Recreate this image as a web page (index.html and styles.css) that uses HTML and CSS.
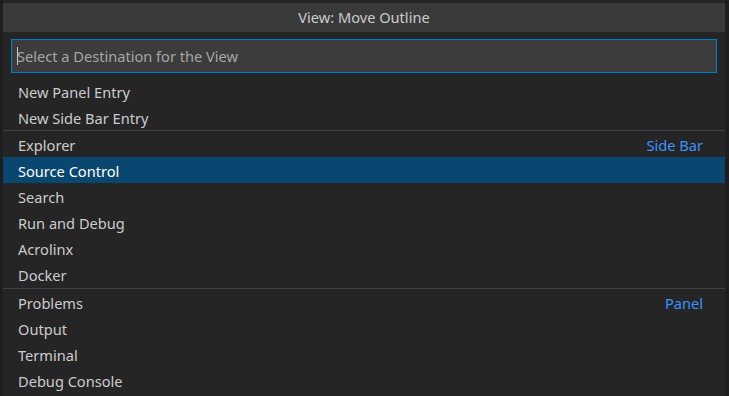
FILE: index.html
```html
<!DOCTYPE html>
<html lang="en">
<head>
    <meta charset="UTF-8">
    <title>View: Move Outline</title>
    <link rel="stylesheet" href="styles.css">
</head>
<body>
    <div class="quick-input">
        <div class="title">View: Move Outline</div>
        <div class="input-box">
            <div class="input">
                <span class="caret"></span>
                <span class="placeholder">Select a Destination for the View</span>
            </div>
        </div>
        <div class="list">
            <div class="row">New Panel Entry</div>
            <div class="row">New Side Bar Entry</div>
            <div class="row sep"><span>Explorer</span><span class="group">Side Bar</span></div>
            <div class="row active">Source Control</div>
            <div class="row">Search</div>
            <div class="row">Run and Debug</div>
            <div class="row">Acrolinx</div>
            <div class="row">Docker</div>
            <div class="row sep"><span>Problems</span><span class="group">Panel</span></div>
            <div class="row">Output</div>
            <div class="row">Terminal</div>
            <div class="row">Debug Console</div>
        </div>
    </div>
</body>
</html>
```

FILE: styles.css
```css
body {
    margin: 0;
    background-color: #1e1e1e;
    font-family: "Noto Sans", sans-serif;
    font-size: 14.6px;
    color: #cccccc;
    overflow: hidden;
}

.quick-input {
    margin: 0 4px 0 3px;
    height: 396px;
    padding-top: 3px;
    box-sizing: border-box;
    background: #252526;
}

.title {
    height: 29px;
    line-height: 29px;
    text-align: center;
    background: #3a3a3b;
}

.input-box {
    padding: 7px 8px 5px 8px;
}

.input {
    display: flex;
    align-items: center;
    height: 34px;
    box-sizing: border-box;
    padding: 0 5px;
    border: 1px solid #007fd4;
    background: #3c3c3c;
}

.caret {
    width: 1px;
    height: 18px;
    background: #cccccc;
    margin-right: -1px;
}

.placeholder {
    color: #a6a6a6;
}

.row {
    display: flex;
    justify-content: space-between;
    align-items: center;
    height: 26px;
    padding: 1px 22px 0 15px;
    box-sizing: border-box;
}

.row.sep {
    height: 27px;
    border-top: 1px solid #3f3f46;
}

.row.sep + .row.sep,
.row:nth-child(9) {
    margin-top: 1px;
}

.row.active {
    background: #094771;
    color: #ffffff;
}

.group {
    color: #3794ff;
}
```
